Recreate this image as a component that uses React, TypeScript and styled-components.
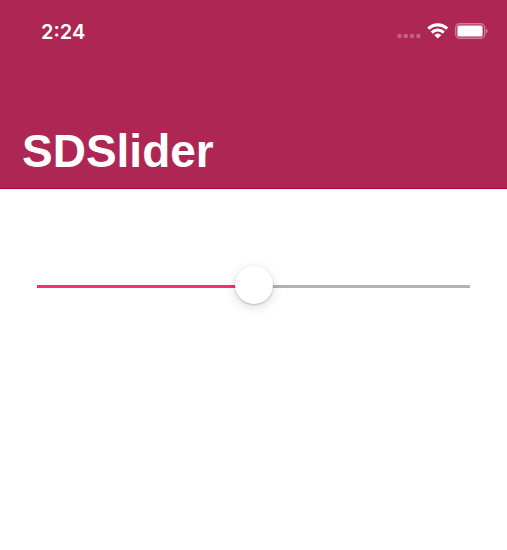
import React, { useState } from "react";
import styled, { createGlobalStyle } from "styled-components";

const GlobalStyle = createGlobalStyle`
  * { box-sizing: border-box; }
  body { margin: 0; background: #fff; }
`;

const Page = styled.div`
  min-height: 100vh;
  background: #fff;
  font-family: "Inter", "Liberation Sans", sans-serif;
`;

const Header = styled.header`
  background: #ad2654;
  color: #fff;
  border-bottom: 1px solid #a80337;
`;

const StatusBar = styled.div`
  display: flex;
  align-items: center;
  justify-content: space-between;
  height: 62px;
  padding: 0 18px 0 41px;
`;

const Clock = styled.time`
  padding-top: 1px;
  font-size: 20px;
  line-height: 24px;
  font-weight: 600;
`;

const Indicators = styled.div`
  display: flex;
  align-items: center;
  gap: 6px;
`;

const Icon = styled.svg`
  display: block;
`;

const Title = styled.h1`
  margin: 0;
  padding: 61px 22px 9px;
  font-family: "Liberation Sans", Arial, sans-serif;
  font-size: 46px;
  line-height: 56px;
  font-weight: 700;
`;

const Content = styled.main`
  padding: 77px 37px;
`;

const Slider = styled.input<{ $fill: number }>`
  display: block;
  width: 100%;
  height: 38px;
  margin: 0;
  appearance: none;
  background: transparent;

  &::-webkit-slider-runnable-track {
    height: 38px;
    border-radius: 2px;
    background: linear-gradient(to right, #fb2f6c ${p => p.$fill}%, #b2b2b2 ${p => p.$fill}%) 0 19px / 100% 3px no-repeat;
  }

  &::-webkit-slider-thumb {
    appearance: none;
    width: 38px;
    height: 38px;
    border-radius: 50%;
    background: #fff;
    box-shadow: 0 1px 2px rgba(0, 0, 0, 0.2), 0 3px 12px rgba(0, 0, 0, 0.15);
  }
`;

function SignalIcon() {
  return (
    <Icon width="24" height="16" viewBox="0 0 24 16" fill="#fff" fillOpacity="0.28" aria-hidden="true">
      <circle cx="2.5" cy="13" r="2.3" />
      <circle cx="8.8" cy="13" r="2.3" />
      <circle cx="15.1" cy="13" r="2.3" />
      <circle cx="21.4" cy="13" r="2.3" />
    </Icon>
  );
}

function WifiIcon() {
  return (
    <Icon width="22" height="16" viewBox="0 0 22 16" fill="none" stroke="#fff" strokeWidth="3.2" aria-hidden="true">
      <path d="M1.3 5.6C6.8.5 14.7.5 20.2 5.6" />
      <path d="M4.7 9.6C8.3 6.3 13.2 6.3 16.8 9.6" />
      <path d="M7.2 12Q10.75 9 14.3 12L10.75 15.6Z" fill="#fff" stroke="none" />
    </Icon>
  );
}

function BatteryIcon() {
  return (
    <Icon width="34" height="16" viewBox="0 0 34 16" fill="#fff" aria-hidden="true">
      <rect x="0.7" y="0.7" width="29" height="14.6" rx="4" fill="none" stroke="#fff" strokeOpacity="0.4" strokeWidth="1.4" />
      <rect x="2.4" y="2.5" width="25.2" height="11" rx="1.6" />
      <path d="M31.2 5.4Q34 8 31.2 10.5Z" fillOpacity="0.5" />
    </Icon>
  );
}

export default function App() {
  const [value, setValue] = useState(50);
  return (
    <Page>
      <GlobalStyle />
      <Header>
        <StatusBar>
          <Clock>2:24</Clock>
          <Indicators>
            <SignalIcon />
            <WifiIcon />
            <BatteryIcon />
          </Indicators>
        </StatusBar>
        <Title>SDSlider</Title>
      </Header>
      <Content>
        <Slider type="range" aria-label="Slider value" value={value} $fill={value} onChange={e => setValue(Number(e.target.value))} />
      </Content>
    </Page>
  );
}
